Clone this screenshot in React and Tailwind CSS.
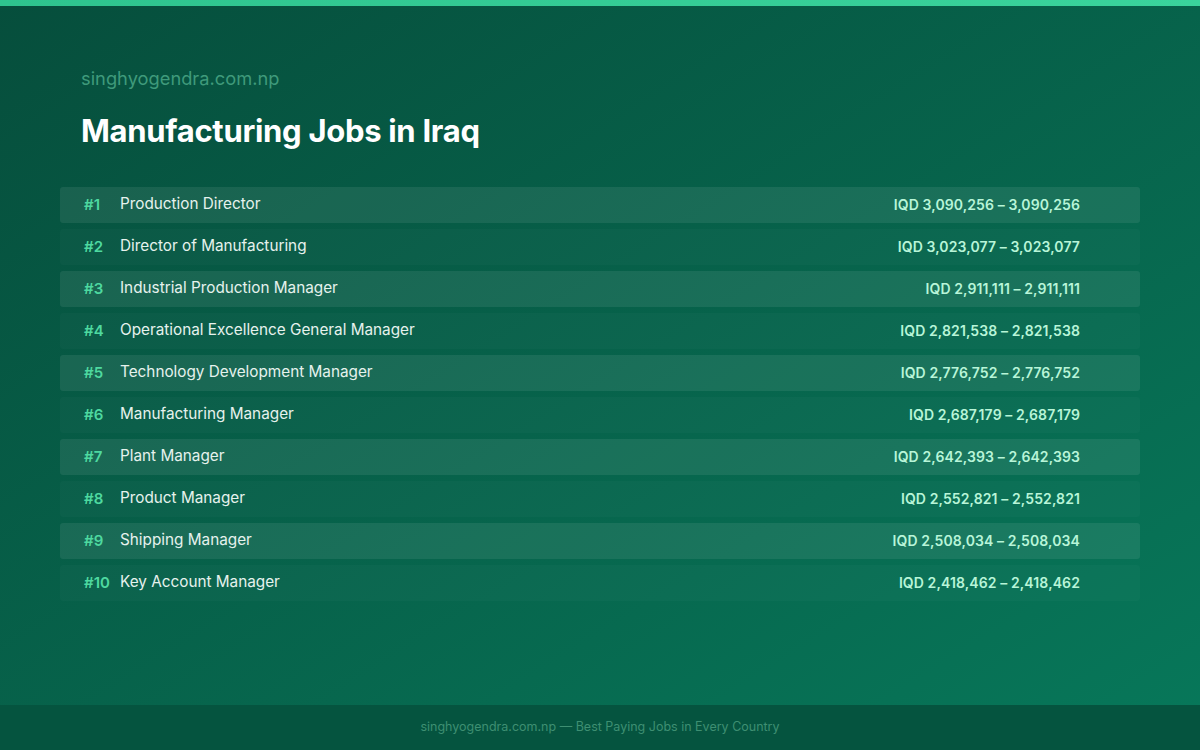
const jobs = [
  ["Production Director", "IQD 3,090,256 – 3,090,256"],
  ["Director of Manufacturing", "IQD 3,023,077 – 3,023,077"],
  ["Industrial Production Manager", "IQD 2,911,111 – 2,911,111"],
  ["Operational Excellence General Manager", "IQD 2,821,538 – 2,821,538"],
  ["Technology Development Manager", "IQD 2,776,752 – 2,776,752"],
  ["Manufacturing Manager", "IQD 2,687,179 – 2,687,179"],
  ["Plant Manager", "IQD 2,642,393 – 2,642,393"],
  ["Product Manager", "IQD 2,552,821 – 2,552,821"],
  ["Shipping Manager", "IQD 2,508,034 – 2,508,034"],
  ["Key Account Manager", "IQD 2,418,462 – 2,418,462"],
];

export default function App() {
  return (
    <div
      className="w-[1200px] h-[750px] flex flex-col bg-gradient-to-br from-[#064e3c] to-[#07785a] overflow-hidden"
      style={{ fontFamily: "Inter, 'Noto Sans', sans-serif" }}
    >
      <div className="h-[6px] bg-gradient-to-r from-[#2ec48e] to-[#3ad49c]" />
      <div className="flex-1 flex flex-col px-[60px]">
        <div className="pl-[21px] pt-[59px] text-[18.3px] text-[#3f9a7b]">singhyogendra.com.np</div>
        <h1 className="pl-[21px] mt-[16px] text-[31px] font-bold text-white tracking-[-0.3px]">
          Manufacturing Jobs in Iraq
        </h1>
        <div className="mt-[32px] flex flex-col gap-[6px]">
          {jobs.map(([title, pay], i) => (
            <div
              key={i}
              className={`h-[36px] rounded-[3px] flex items-center pl-[24px] pr-[60px] ${i % 2 === 0 ? "bg-white/[0.08]" : "bg-white/[0.025]"}`}
            >
              <span className="w-[36px] text-[15px] font-semibold text-[#4ed9a0]">#{i + 1}</span>
              <span className="flex-1 text-[15.3px] text-[#e6f2ed]">{title}</span>
              <span className="text-[14px] font-semibold tracking-[0.1px] text-[#b8f5d8]">{pay}</span>
            </div>
          ))}
        </div>
      </div>
      <div className="h-[45px] bg-[#05543f] flex items-center justify-center text-[12.5px] text-[#3e8f72]">
        singhyogendra.com.np — Best Paying Jobs in Every Country
      </div>
    </div>
  );
}
